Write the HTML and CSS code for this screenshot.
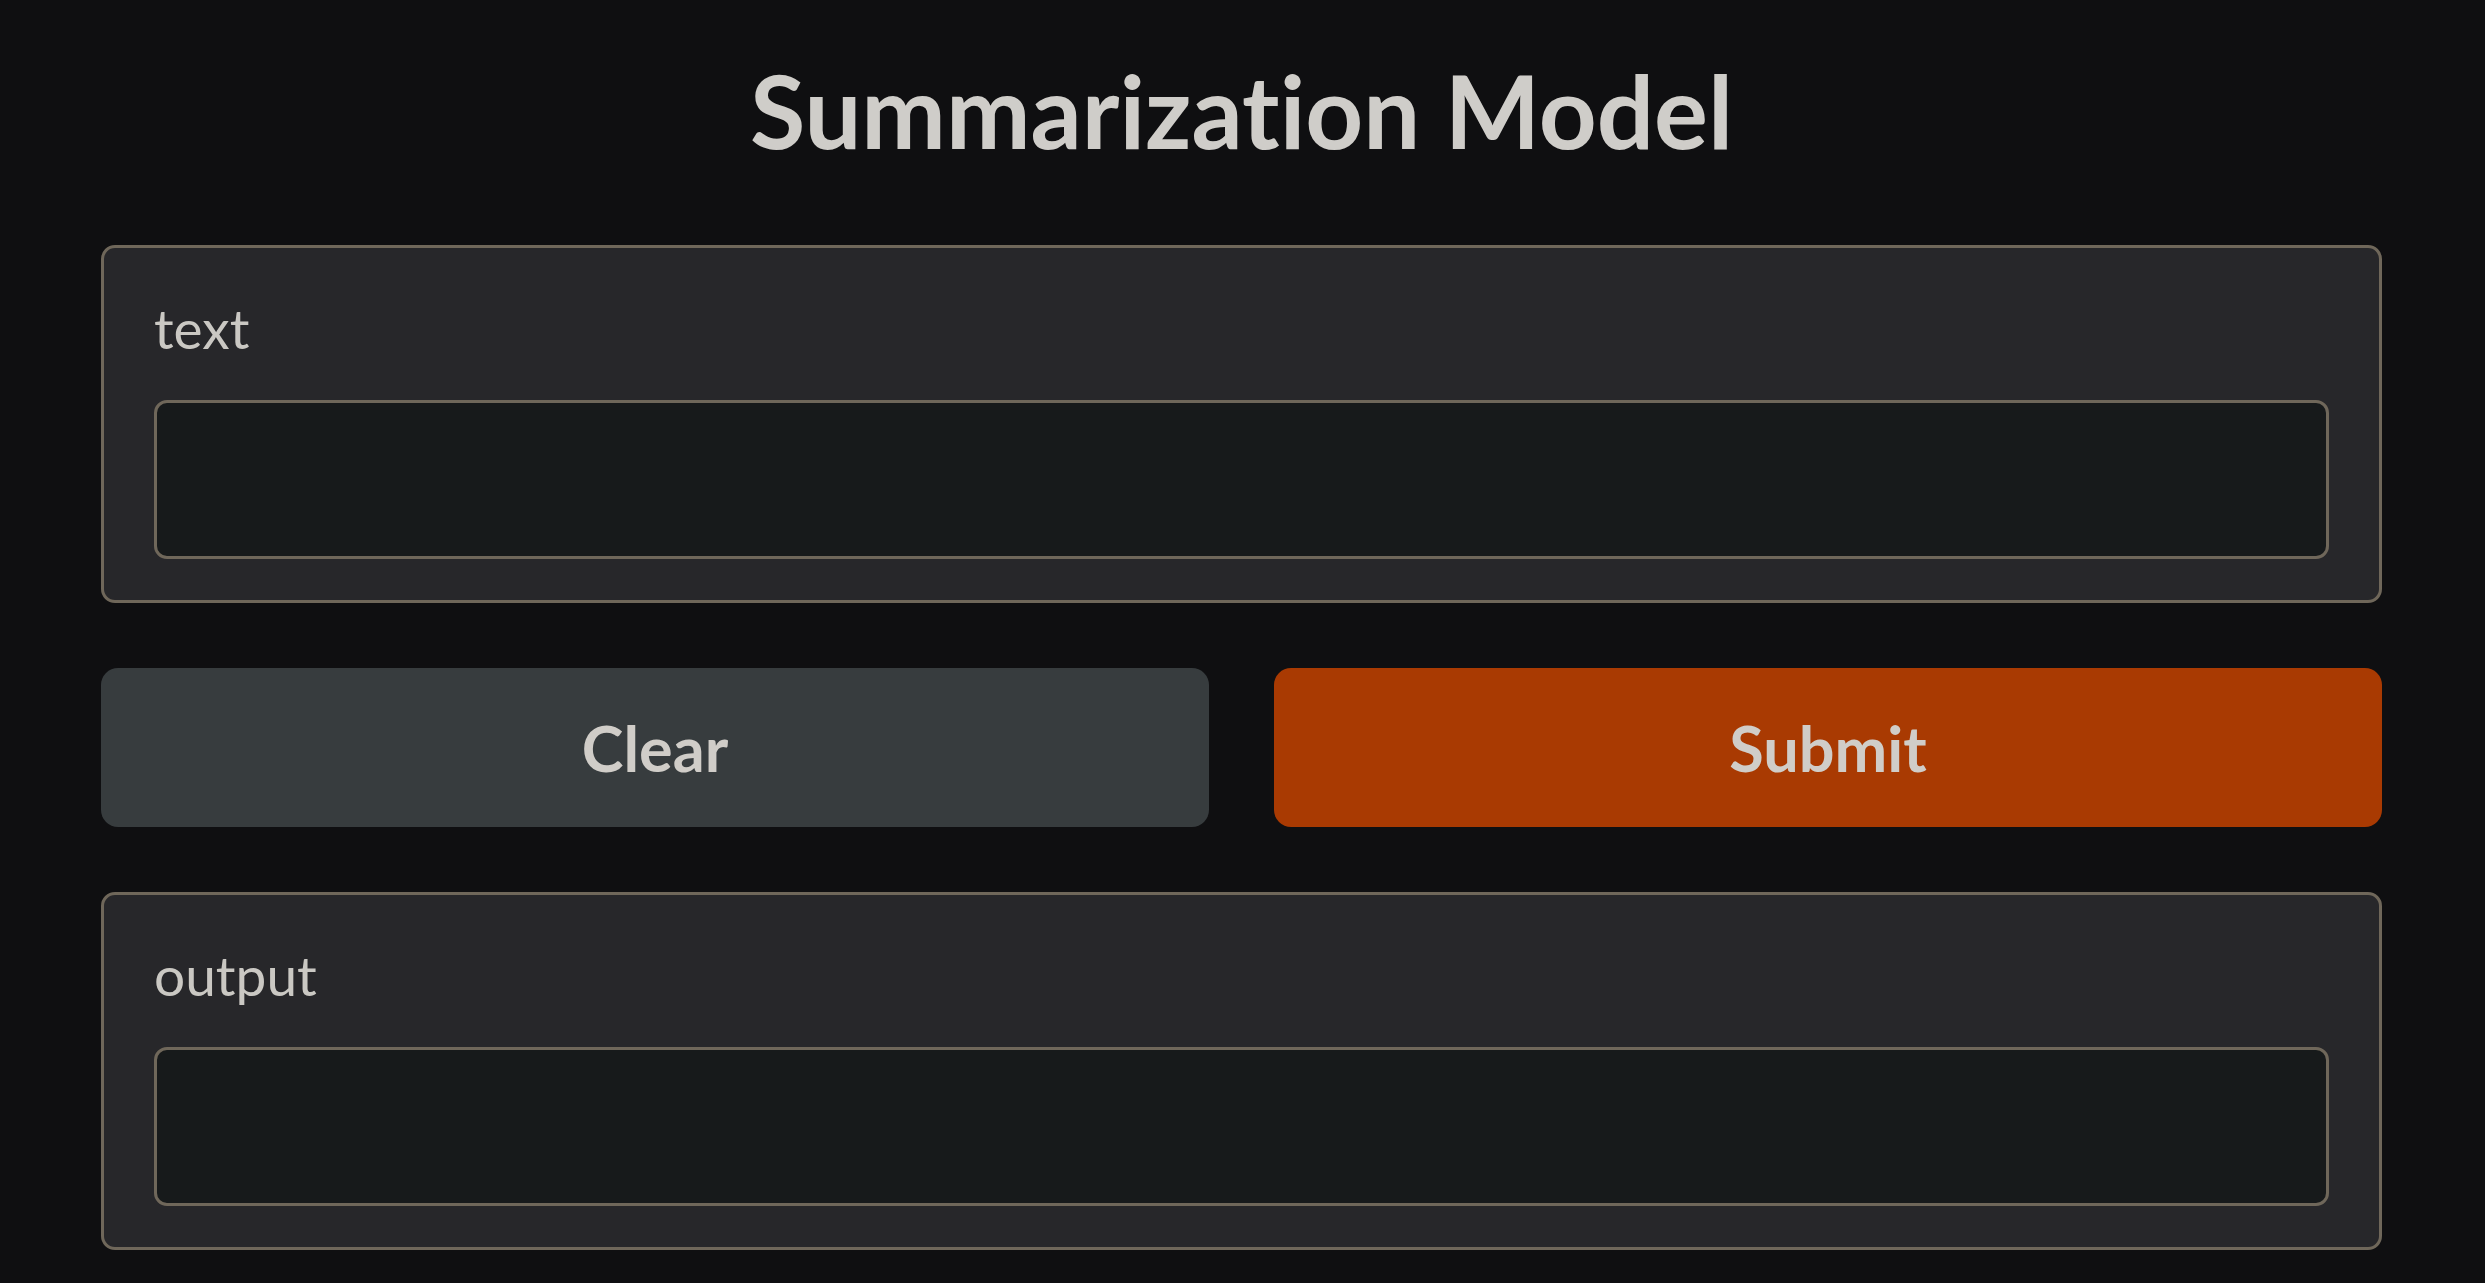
FILE: index.html
```html
<!DOCTYPE html>
<html lang="en">
<head>
<meta charset="utf-8">
<title>Summarization Model</title>
<link rel="stylesheet" href="styles.css">
</head>
<body>
<main class="app">
  <h1 class="title">Summarization Model</h1>
  <section class="panel">
    <label class="label" for="text-in">text</label>
    <textarea class="field" id="text-in"></textarea>
  </section>
  <div class="actions">
    <button class="btn btn-secondary" type="button">Clear</button>
    <button class="btn btn-primary" type="button">Submit</button>
  </div>
  <section class="panel">
    <label class="label" for="text-out">output</label>
    <textarea class="field" id="text-out" readonly></textarea>
  </section>
</main>
</body>
</html>
```

FILE: styles.css
```css
* { box-sizing: border-box; }
html, body {
  margin: 0;
  padding: 0;
  background: #0f0f11;
  color: #cecbc6;
  font-family: Lato, "Noto Sans", sans-serif;
  font-variant-ligatures: none;
}
.app {
  display: flex;
  flex-direction: column;
  padding: 0 103px 0 101px;
  height: 1283px;
  overflow: hidden;
}
.title {
  margin: 50px 0 74px;
  font-size: 101px;
  line-height: 1.2;
  font-weight: 700;
  text-align: center;
  color: #cfcdc9;
}
.panel {
  display: flex;
  flex-direction: column;
  background: #27272a;
  border: 3px solid #6f675a;
  border-radius: 14px;
  padding: 47px 50px 41px;
}
.label {
  font-size: 55px;
  line-height: 1.2;
  color: #cac8c3;
  margin-bottom: 39px;
}
.field {
  display: block;
  width: 100%;
  height: 159px;
  background: #171a1b;
  border: 3px solid #6f675a;
  border-radius: 13px;
  resize: none;
  outline: none;
  color: #cecbc6;
  font: inherit;
}
.actions {
  display: grid;
  grid-template-columns: 1fr 1fr;
  gap: 65px;
  margin: 65px 0;
}
.btn {
  height: 159px;
  border: none;
  border-radius: 17px;
  font-family: Lato, "Noto Sans", sans-serif;
  font-size: 63px;
  font-weight: 700;
  color: #d0cdc8;
  display: flex;
  align-items: center;
  justify-content: center;
  padding: 0;
}
.btn-secondary { background: #373c3e; }
.btn-primary { background: #a93a02; }
```
